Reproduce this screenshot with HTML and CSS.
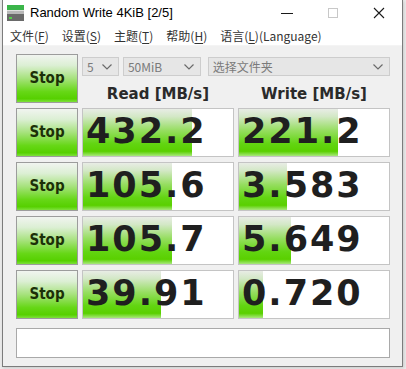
FILE: index.html
```html
<!DOCTYPE html>
<html lang="zh-CN">
<head>
<meta charset="utf-8">
<title>Random Write 4KiB [2/5]</title>
<link rel="stylesheet" href="styles.css">
</head>
<body>
<div class="window">
  <div class="titlebar">
    <svg class="app-icon" width="17" height="16" viewBox="0 0 17 16">
      <rect x="0" y="0" width="17" height="5" fill="#3bb54a"/>
      <rect x="0" y="5" width="17" height="1" fill="#e0e0e0"/>
      <rect x="0" y="6" width="17" height="3" fill="#b8b8b8"/>
      <rect x="0" y="9" width="17" height="7" fill="#6a6a6a"/>
      <rect x="2" y="12" width="3" height="2" fill="#54d04a"/>
    </svg>
    <span class="title">Random Write 4KiB [2/5]</span>
    <div class="controls">
      <span class="ctl"><svg width="12" height="12" viewBox="0 0 12 12"><line x1="0" y1="6.5" x2="12" y2="6.5" stroke="#1a1a1a" stroke-width="1"/></svg></span>
      <span class="ctl"><svg width="12" height="12" viewBox="0 0 12 12"><rect x="1.5" y="1.5" width="9" height="9" fill="none" stroke="#c8c8c8" stroke-width="1"/></svg></span>
      <span class="ctl"><svg width="12" height="12" viewBox="0 0 12 12"><path d="M1 1 L11 11 M11 1 L1 11" stroke="#1a1a1a" stroke-width="1.1" fill="none"/></svg></span>
    </div>
  </div>
  <div class="menubar">
    <span class="menu-item">文件(<u>F</u>)</span>
    <span class="menu-item">设置(<u>S</u>)</span>
    <span class="menu-item">主题(<u>T</u>)</span>
    <span class="menu-item">帮助(<u>H</u>)</span>
    <span class="menu-item">语言(<u>L</u>)(Language)</span>
  </div>
  <div class="client">
    <div class="grid">
      <div class="stop">Stop</div>
      <div class="config">
        <div class="selects">
          <div class="select s-count"><span>5</span><svg width="10" height="6" viewBox="0 0 10 6"><polyline points="0.5,0.5 5,5 9.5,0.5" fill="none" stroke="#6a6a6a" stroke-width="1.2"/></svg></div>
          <div class="select s-size"><span>50MiB</span><svg width="10" height="6" viewBox="0 0 10 6"><polyline points="0.5,0.5 5,5 9.5,0.5" fill="none" stroke="#6a6a6a" stroke-width="1.2"/></svg></div>
          <div class="select s-folder"><span>选择文件夹</span><svg width="10" height="6" viewBox="0 0 10 6"><polyline points="0.5,0.5 5,5 9.5,0.5" fill="none" stroke="#6a6a6a" stroke-width="1.2"/></svg></div>
        </div>
        <div class="headers">
          <div class="head">Read [MB/s]</div>
          <div class="head">Write [MB/s]</div>
        </div>
      </div>

      <div class="stop">Stop</div>
      <div class="cell"><div class="bar" style="width:109px"></div><span class="val">432.2</span></div>
      <div class="cell"><div class="bar" style="width:99px"></div><span class="val">221.2</span></div>

      <div class="stop">Stop</div>
      <div class="cell"><div class="bar" style="width:89px"></div><span class="val">105.6</span></div>
      <div class="cell"><div class="bar" style="width:48px"></div><span class="val">3.583</span></div>

      <div class="stop">Stop</div>
      <div class="cell"><div class="bar" style="width:89px"></div><span class="val">105.7</span></div>
      <div class="cell"><div class="bar" style="width:52px"></div><span class="val">5.649</span></div>

      <div class="stop">Stop</div>
      <div class="cell"><div class="bar" style="width:78px"></div><span class="val">39.91</span></div>
      <div class="cell"><div class="bar" style="width:24px"></div><span class="val">0.720</span></div>
    </div>
    <div class="comment"></div>
  </div>
</div>
</body>
</html>
```
FILE: styles.css
```css
html, body {
  margin: 0;
  padding: 0;
}
body {
  width: 406px;
  height: 369px;
  background: #ebebeb;
  overflow: hidden;
  font-family: "Noto Sans", "Noto Sans CJK SC", sans-serif;
}
.window {
  margin-left: 2px;
  width: 399px;
  height: 366px;
  border: 1px solid #7c7c7c;
  border-top: none;
  background: #f0f0f0;
  display: flex;
  flex-direction: column;
  box-shadow: 1px 1px 3px rgba(0,0,0,0.15);
}
.titlebar {
  height: 25px;
  background: #ffffff;
  display: flex;
  align-items: center;
}
.app-icon {
  margin-left: 4px;
  margin-top: 1px;
}
.title {
  margin-left: 6px;
  font-family: "Liberation Sans", sans-serif;
  font-size: 13px;
  color: #000;
}
.controls {
  margin-left: auto;
  display: flex;
}
.ctl {
  width: 46px;
  height: 25px;
  display: flex;
  align-items: center;
  justify-content: center;
}
.menubar {
  height: 19px;
  background: #ffffff;
  display: flex;
  align-items: center;
  gap: 13px;
  padding-left: 7px;
  padding-top: 1px;
  font-family: "Noto Sans CJK SC", sans-serif;
  font-size: 12px;
  color: #333;
  border-bottom: 1px solid #f4f4f4;
}
.menu-item u {
  text-decoration-thickness: 1px;
  text-underline-offset: 2px;
}
.client {
  padding: 8px 13px 0 13px;
  display: flex;
  flex-direction: column;
  gap: 9px;
}
.grid {
  display: grid;
  grid-template-columns: 62px 152px 152px;
  grid-auto-rows: 49px;
  column-gap: 4px;
  row-gap: 5px;
}
.stop {
  box-sizing: border-box;
  border: 1px solid #9c9c9c;
  background: linear-gradient(#f1f4f0 0%, #dcefd4 22%, #a6e27c 50%, #66d716 78%, #56d000 93%, #7ee13c 100%);
  display: flex;
  align-items: center;
  justify-content: center;
  font-family: "DejaVu Sans Condensed", "DejaVu Sans", sans-serif;
  font-weight: bold;
  font-size: 15px;
  color: #1c3008;
  padding-bottom: 1px;
}
.config {
  grid-column: 2 / 4;
  display: flex;
  flex-direction: column;
}
.selects {
  margin-top: 3px;
  display: flex;
  height: 19px;
}
.select {
  box-sizing: border-box;
  height: 19px;
  border: 1px solid #cdcdcd;
  background: #e6e6e6;
  display: flex;
  align-items: center;
  justify-content: space-between;
  padding: 0 6px 0 4px;
  font-family: "Noto Sans CJK SC", sans-serif;
  font-size: 12px;
  color: #7a7a7a;
}
.s-count { width: 37px; }
.s-size { width: 78px; margin-left: 4px; }
.s-folder { width: 183px; margin-left: 7px; }
.headers {
  margin-top: 9px;
  display: grid;
  grid-template-columns: 152px 152px;
  column-gap: 4px;
}
.head {
  text-align: center;
  font-family: "DejaVu Sans", sans-serif;
  font-weight: bold;
  font-size: 15px;
  color: #2a2a2a;
  line-height: 18px;
}
.cell {
  position: relative;
  box-sizing: border-box;
  border: 1px solid #c4c4c4;
  background: #ffffff;
  overflow: hidden;
  display: flex;
  align-items: center;
}
.bar {
  position: absolute;
  left: 0;
  top: 0;
  bottom: 0;
  background: linear-gradient(#e8ece5 0%, #d3e8c6 16%, #97de62 45%, #62d511 74%, #5ad000 90%, #a8e87c 100%);
}
.val {
  position: relative;
  padding-left: 3px;
  padding-bottom: 4px;
  font-family: "DejaVu Sans", sans-serif;
  font-weight: bold;
  font-size: 35px;
  letter-spacing: 2px;
  color: #1f1f1f;
  line-height: 40px;
}
.comment {
  box-sizing: border-box;
  height: 30px;
  width: 374px;
  border: 1px solid #a9a9a9;
  background: #ffffff;
}
```
